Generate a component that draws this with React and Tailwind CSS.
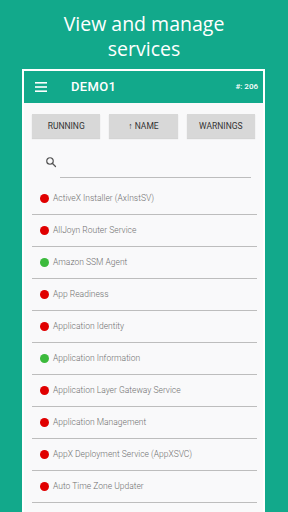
import React from 'react';

const services = [
  { name: 'ActiveX Installer (AxInstSV)', running: false },
  { name: 'AllJoyn Router Service', running: false },
  { name: 'Amazon SSM Agent', running: true },
  { name: 'App Readiness', running: false },
  { name: 'Application Identity', running: false },
  { name: 'Application Information', running: true },
  { name: 'Application Layer Gateway Service', running: false },
  { name: 'Application Management', running: false },
  { name: 'AppX Deployment Service (AppXSVC)', running: false },
  { name: 'Auto Time Zone Updater', running: false },
];

const App = () => {
  return (
    <div className="w-[288px] h-[512px] overflow-hidden bg-[#12a98b] flex flex-col">
      {/* Caption */}
      <h1
        className="pt-[11px] text-center text-[19.5px] leading-[25px] text-white"
        style={{ fontFamily: '"Open Sans", sans-serif' }}
      >
        View and manage
        <br />
        services
      </h1>

      {/* Phone frame */}
      <div
        className="mt-[8px] ml-[22px] mr-[23px] flex-1 border-2 border-b-0 border-white bg-[#f9f9fa] flex flex-col"
        style={{ fontFamily: 'Roboto, sans-serif' }}
      >
        {/* Toolbar */}
        <div className="h-[32px] bg-[#12a98b] flex items-center pl-[11px] pr-[5px] text-white">
          <svg width="12" height="10" viewBox="0 0 12 10" fill="white">
            <rect x="0" y="0" width="12" height="1.6" />
            <rect x="0" y="4.2" width="12" height="1.6" />
            <rect x="0" y="8.4" width="12" height="1.6" />
          </svg>
          <span className="ml-[24px] text-[13px] font-medium tracking-wide">DEMO1</span>
          <span className="ml-auto text-[8px] font-medium">#: 206</span>
        </div>

        {/* Sort buttons */}
        <div className="mt-[11px] px-2 flex gap-[9px]">
          {['RUNNING', '↑ NAME', 'WARNINGS'].map((b) => (
            <div
              key={b}
              className="flex-1 h-[24px] bg-[#d8d8d8] shadow-[0_1px_1px_rgba(0,0,0,0.15)] flex items-center justify-center text-[8.5px] text-[#333]"
            >
              {b}
            </div>
          ))}
        </div>

        {/* Search */}
        <div className="mt-[18px] flex items-start pl-[21px] pr-[12px]">
          <svg width="12" height="12" viewBox="0 0 24 24" fill="none" stroke="#555" strokeWidth="2.4" strokeLinecap="round">
            <circle cx="10" cy="10" r="6.5" />
            <path d="M15 15l6 6" />
          </svg>
          <div className="ml-[3px] mt-[21px] flex-1 h-px bg-[#bdbdbd]" />
        </div>

        {/* Service list */}
        <div className="mt-[5px] ml-2 mr-[6px] flex flex-col">
          {services.map((s) => (
            <div key={s.name} className="h-[32px] flex items-center gap-1 pl-2 border-b border-[#bdbdbd]">
              <span
                className={`w-[9px] h-[9px] rounded-full ${s.running ? 'bg-[#3cba3c]' : 'bg-[#e00000]'}`}
              />
              <span className="text-[8.5px] font-light text-[#707070]">{s.name}</span>
            </div>
          ))}
        </div>
      </div>
    </div>
  );
};

export default App;
